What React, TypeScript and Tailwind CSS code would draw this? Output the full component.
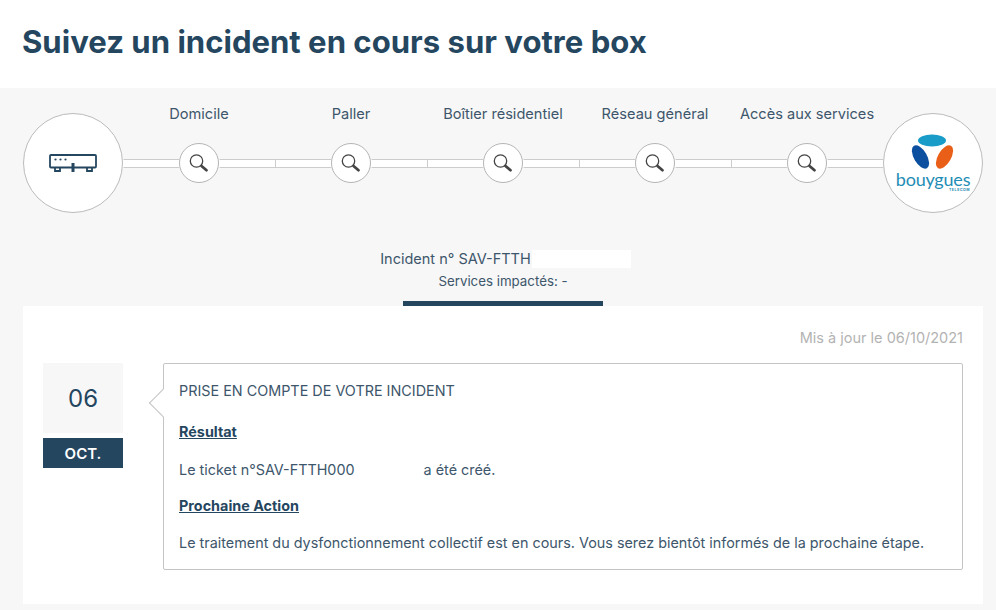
const font = "[font-family:Inter,'Liberation_Sans',sans-serif]";

const steps = ["Domicile", "Paller", "Boîtier résidentiel", "Réseau général", "Accès aux services"];

function SearchIcon() {
  return (
    <svg width="20" height="20" viewBox="0 0 20 20" fill="none">
      <circle cx="7.5" cy="8" r="6.2" stroke="#444" strokeWidth="1.3" />
      <path d="M12.5 13l5 4.2" stroke="#444" strokeWidth="2.8" strokeLinecap="round" />
    </svg>
  );
}

function BoxIcon() {
  return (
    <svg width="48" height="18" viewBox="0 0 48 18" fill="none" stroke="#25465f" strokeWidth="1.8">
      <rect x="1" y="1" width="46" height="12.5" rx="1" />
      <path d="M6 14v3h5v-3M38 14v3h5v-3" />
      <path d="M24 9v9" strokeWidth="3" />
      <circle cx="6.5" cy="5.5" r="1.1" fill="#25465f" stroke="none" />
      <circle cx="11.5" cy="5.5" r="1.1" fill="#25465f" stroke="none" />
      <circle cx="16.5" cy="5.5" r="1.1" fill="#25465f" stroke="none" />
    </svg>
  );
}

function BouyguesLogo() {
  return (
    <div className="flex flex-col items-center">
      <svg width="46" height="36" viewBox="0 0 46 36">
        <ellipse cx="22" cy="6.5" rx="14" ry="6" fill="#1a9cc9" />
        <ellipse cx="10.5" cy="23" rx="6.5" ry="13" transform="rotate(-30 10.5 23)" fill="#0b4f9e" />
        <ellipse cx="34.5" cy="23" rx="6.5" ry="13" transform="rotate(30 34.5 23)" fill="#ea5f17" />
      </svg>
      <div className="mt-[2px] h-[14px] text-[18px] leading-[14px] tracking-[-0.2px] text-[#1f8db5] [font-family:Lato,sans-serif]">bouygues</div>
      <div className="mt-[2px] w-full text-right text-[3.5px] leading-[4px] font-bold tracking-[0.6px] text-[#1f8db5]">TELECOM</div>
    </div>
  );
}

export default function App() {
  return (
    <div className={`h-[610px] w-[996px] overflow-hidden bg-[#f7f7f7] text-[#25465f] ${font}`}>
      <div className="flex h-[88px] items-start bg-white px-[22px] pt-[21px]">
        <h1 className="text-[31.1px] leading-[42px] font-bold text-[#25465f]">
          Suivez un incident en cours sur votre box
        </h1>
      </div>

      <div className="pt-[16px] pr-[13px] pl-[23px]">
        <div className="flex items-start">
          <div className="z-10 mt-[9px] flex h-[100px] w-[100px] shrink-0 items-center justify-center rounded-full border border-[#bbbbbb] bg-white">
            <BoxIcon />
          </div>
          <div className="grid grow grid-cols-5">
            {steps.map((label, i) => (
              <div key={label} className="flex flex-col items-center">
                <div className="h-[39px] text-[14.6px] leading-[20px] whitespace-nowrap text-[#3d566b]">{label}</div>
                <div className="flex w-full items-center">
                  <div className={`h-[9px] grow border-y border-l border-[#cccccc] bg-white ${i === 0 ? "border-l-white" : ""}`} />
                  <div className="flex h-[40px] w-[40px] shrink-0 items-center justify-center rounded-full border border-[#b5b5b5] bg-white">
                    <SearchIcon />
                  </div>
                  <div className="h-[9px] grow border-y border-l border-[#cccccc] border-l-white bg-white" />
                </div>
              </div>
            ))}
          </div>
          <div className="z-10 mt-[9px] flex h-[100px] w-[100px] shrink-0 items-center justify-center rounded-full border border-[#bbbbbb] bg-white">
            <BouyguesLogo />
          </div>
        </div>

        <div className="mt-[35px] flex flex-col items-center text-[14.5px] leading-[22px] text-[#3d566b]">
          <div className="flex items-center pl-[5px]">
            <span>Incident n° SAV-FTTH</span>
            <span className="ml-[1px] h-[18px] w-[99px] bg-white" />
          </div>
          <div className="text-[13.3px]">Services impactés: -</div>
          <div className="mt-[9px] h-[5px] w-[200px] bg-[#25465f]" />
        </div>

        <div className="h-[298px] w-[960px] bg-white px-[20px] pt-[22px]">
          <div className="text-right text-[14.5px] leading-[20px] text-[#b3b3b3]">Mis à jour le 06/10/2021</div>
          <div className="mt-[15px] flex gap-[40px]">
            <div className="w-[80px] shrink-0">
              <div className="flex h-[70px] items-center justify-center bg-[#f7f7f7] pt-[2px] text-[24px] text-[#25465f]">06</div>
              <div className="mt-[5px] flex h-[30px] items-center justify-center bg-[#25465f] pt-[2px] text-[15px] font-semibold text-white">OCT.</div>
            </div>
            <div className="relative h-[207px] w-[800px] rounded-[2px] border border-[#c4c4c4] bg-white pt-[17px] pl-[15px] text-[14.38px] leading-[20px] text-[#3d566b]">
              <div className="absolute top-[29px] -left-[11px] h-[20px] w-[20px] rotate-45 border-b border-l border-[#c4c4c4] bg-white" />
              <p className="relative">PRISE EN COMPTE DE VOTRE INCIDENT</p>
              <p className="mt-[21px] font-bold text-[#25465f] underline">Résultat</p>
              <p className="mt-[18px]">Le ticket n°SAV-FTTH000<span className="inline-block w-[69px]" />a été créé.</p>
              <p className="mt-[16px] font-bold text-[#25465f] underline">Prochaine Action</p>
              <p className="mt-[17px] whitespace-nowrap">Le traitement du dysfonctionnement collectif est en cours. Vous serez bientôt informés de la prochaine étape.</p>
            </div>
          </div>
        </div>
      </div>
    </div>
  );
}
